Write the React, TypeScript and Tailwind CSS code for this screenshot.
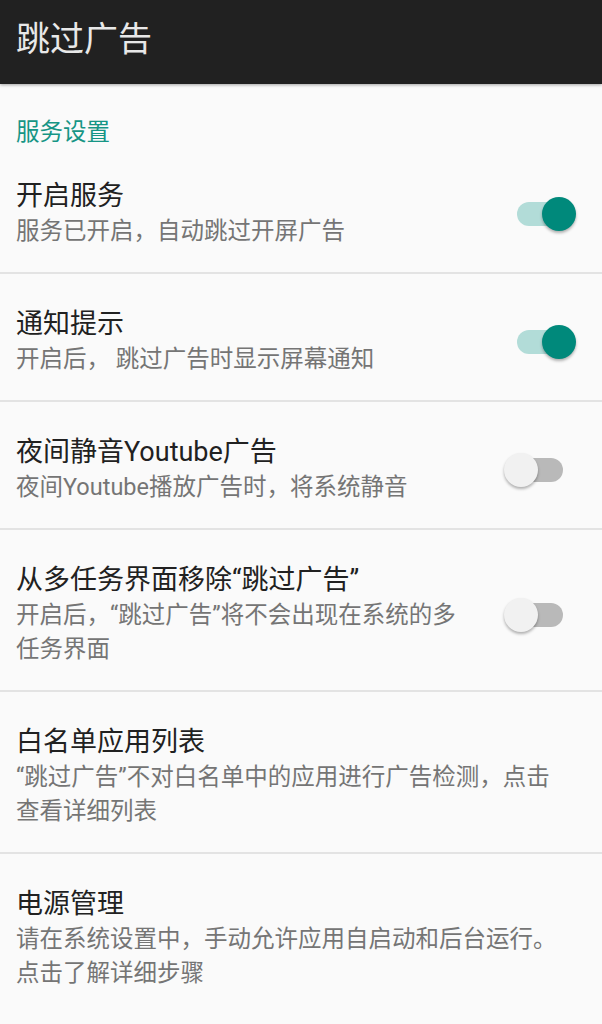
const font = { fontFamily: 'Roboto, "Noto Sans CJK SC", sans-serif' };

type Item = {
  title: string;
  summary: string;
  toggle?: boolean;
};

const items: Item[] = [
  { title: "开启服务", summary: "服务已开启，自动跳过开屏广告", toggle: true },
  { title: "通知提示", summary: "开启后， 跳过广告时显示屏幕通知", toggle: true },
  { title: "夜间静音Youtube广告", summary: "夜间Youtube播放广告时，将系统静音", toggle: false },
  {
    title: "从多任务界面移除“跳过广告”",
    summary: "开启后，“跳过广告”将不会出现在系统的多任务界面",
    toggle: false,
  },
  { title: "白名单应用列表", summary: "“跳过广告”不对白名单中的应用进行广告检测，点击查看详细列表" },
  { title: "电源管理", summary: "请在系统设置中，手动允许应用自启动和后台运行。点击了解详细步骤" },
];

function Switch({ on }: { on: boolean }) {
  return (
    <div className="relative h-[34px] w-[72px] shrink-0">
      <div
        className={
          "absolute left-[13px] top-[5px] h-[24px] w-[46px] rounded-full " +
          (on ? "bg-[#b2dcd8]" : "bg-[#b9b9b9]")
        }
      />
      <div
        className={
          "absolute top-0 h-[34px] w-[34px] rounded-full shadow-[0_2px_3px_rgba(0,0,0,0.3)] " +
          (on ? "left-[38px] bg-[#00897b]" : "left-0 bg-[#f1f1f1]")
        }
      />
    </div>
  );
}

export default function App() {
  return (
    <div className="min-h-[1024px] w-[602px] bg-[#fafafa]" style={font}>
      <header className="relative z-10 flex h-[84px] items-center bg-[#212121] px-4 shadow-[0_1px_3px_rgba(0,0,0,0.35)]">
        <h1 className="mb-[6px] text-[34px] leading-none text-[#e8e8e8]">跳过广告</h1>
      </header>
      <div className="px-4 pt-[34px] text-[23.5px] leading-[28px] text-[#169585]">服务设置</div>
      {items.map((item, i) => (
        <div key={item.title}>
          <div
            className={
              "flex items-center pl-4 pt-[33px] pb-[24px] " +
              (item.toggle === undefined ? "pr-[38px]" : "pr-[26px]")
            }
          >
            <div className={item.toggle === undefined ? "flex-1" : "w-[450px] shrink-0"}>
              <div className="text-[27px] leading-[35px] text-[#212121]">{item.title}</div>
              <div className="text-[23.5px] leading-[34px] text-[#757575]">{item.summary}</div>
            </div>
            {item.toggle !== undefined && (
              <div className="flex flex-1 justify-end">
                <Switch on={item.toggle} />
              </div>
            )}
          </div>
          {i < items.length - 1 && <div className="h-[2px] bg-[#e3e3e3]" />}
        </div>
      ))}
    </div>
  );
}
